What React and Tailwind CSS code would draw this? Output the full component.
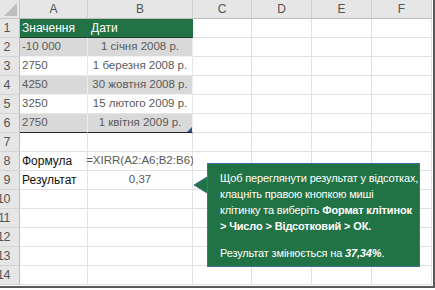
import React from 'react';

const cols = [
  { key: 'A', w: 'w-[68px]' },
  { key: 'B', w: 'w-[105px]' },
  { key: 'C', w: 'w-[59px]' },
  { key: 'D', w: 'w-[60px]' },
  { key: 'E', w: 'w-[60px]' },
  { key: 'F', w: 'w-[60px]' },
];

const rows = [
  { a: 'Значення', b: 'Дати', head: true },
  { a: '-10 000', b: '1 січня 2008 р.', stripe: true },
  { a: '2750', b: '1 березня 2008 р.' },
  { a: '4250', b: '30 жовтня 2008 р.', stripe: true },
  { a: '3250', b: '15 лютого 2009 р.' },
  { a: '2750', b: '1 квітня 2009 р.', stripe: true, last: true },
  {},
  { a: 'Формула', b: '=XIRR(A2:A6;B2:B6)', label: true },
  { a: 'Результат', b: '0,37', label: true },
  {},
  {},
  {},
  {},
  {},
];

const Cell = ({ row, col, children }) => {
  const inTable = col === 'A' || col === 'B';
  let bg = 'bg-white';
  let border = 'border-r border-b border-[#e1e1e1]';
  if (inTable && row.head) {
    bg = 'bg-[#217346]';
    border = 'border-r border-b border-r-[#217346] border-b-[#1a3b2a]';
  } else if (inTable && row.stripe) {
    bg = 'bg-[#d9d9d9]';
    border = row.last
      ? 'border-r border-b border-r-[#eeeeee] border-b-[#262626]'
      : 'border-r border-b border-r-[#eeeeee] border-b-[#f2f2f2]';
  } else if (inTable && row.a && !row.label) {
    border = 'border-r border-b border-[#e6e6e6]';
  }
  return (
    <div className={`${cols.find((c) => c.key === col).w} h-[19px] shrink-0 relative ${bg} ${border}`}>
      {children}
    </div>
  );
};

export default function App() {
  return (
    <div className="w-[435px] h-[290px] bg-white relative overflow-hidden font-['Liberation_Sans','Noto_Sans',sans-serif]">
      <div className="w-[435px] h-[288px] border-r-2 border-b-2 border-[#5a5a5a] overflow-hidden">
        {/* column headers */}
        <div className="flex h-[19px]">
          <div className="w-[20px] h-[19px] shrink-0 bg-[#e6e6e6] border-r border-b border-[#c8c8c8] relative">
            <div className="absolute right-[2px] bottom-[2px] w-0 h-0 border-l-[13px] border-l-transparent border-b-[13px] border-b-[#bdbdbd]" />
          </div>
          {cols.map((c) => (
            <div
              key={c.key}
              className={`${c.w} h-[19px] shrink-0 bg-[#e6e6e6] border-r border-b border-r-[#d0d0d0] border-b-[#bcbcbc] flex items-center justify-center text-[12px] text-[#555555]`}
            >
              {c.key}
            </div>
          ))}
        </div>

        {rows.map((row, i) => (
          <div key={i} className="flex h-[19px]">
            <div className="w-[20px] h-[19px] shrink-0 bg-[#e6e6e6] border-r border-b border-r-[#bcbcbc] border-b-[#d4d4d4] flex items-center justify-end pr-[9px] overflow-hidden text-[12.5px] text-[#555555] leading-none">
              <span className="whitespace-nowrap tracking-[-0.5px]">{i + 1}</span>
            </div>
            <Cell row={row} col="A">
              {row.a && (
                <div
                  className={`absolute inset-0 flex items-center pl-[2px] whitespace-nowrap ${
                    row.head
                      ? 'text-[12px] text-white'
                      : row.label
                      ? 'text-[12px] text-[#111111]'
                      : 'text-[11.5px] text-[#595959]'
                  }`}
                >
                  {row.a}
                </div>
              )}
            </Cell>
            <Cell row={row} col="B">
              {row.b && (
                <div
                  className={`absolute inset-0 flex items-center text-[11.5px] whitespace-nowrap ${
                    row.head ? 'justify-start pl-[3px] text-[12px] text-white' : 'justify-center text-[#595959]'
                  }`}
                >
                  {row.b}
                </div>
              )}
              {row.last && (
                <div className="absolute right-0 bottom-0 w-0 h-0 border-l-[5px] border-l-transparent border-b-[5px] border-b-[#2f5597]" />
              )}
            </Cell>
            <Cell row={row} col="C" />
            <Cell row={row} col="D" />
            <Cell row={row} col="E" />
            <Cell row={row} col="F" />
          </div>
        ))}
      </div>

      {/* callout */}
      <div className="absolute left-[207px] top-[163px] w-[213px] h-[104px]">
        <svg className="absolute left-[-14px] top-[14px]" width="16" height="18" viewBox="0 0 16 18">
          <path d="M14 0 L1 8 L14 16" fill="#217346" stroke="#41719c" strokeWidth="1" />
        </svg>
        <div className="w-full h-full bg-[#217346] border border-[#41719c] pl-[12px] pt-[6px] text-white text-[11px] tracking-[-0.15px] leading-[16px]">
          <p className="whitespace-nowrap">Щоб переглянути результат у відсотках,</p>
          <p className="whitespace-nowrap">клацніть правою кнопкою миші</p>
          <p className="whitespace-nowrap">
            клітинку та виберіть <b>Формат клітинок</b>
          </p>
          <p className="whitespace-nowrap font-bold">&gt; Число &gt; Відсотковий &gt; ОК.</p>
          <p className="whitespace-nowrap mt-[11px]">
            Результат змінюється на <b><i>37,34%</i></b>.
          </p>
        </div>
      </div>
    </div>
  );
}
